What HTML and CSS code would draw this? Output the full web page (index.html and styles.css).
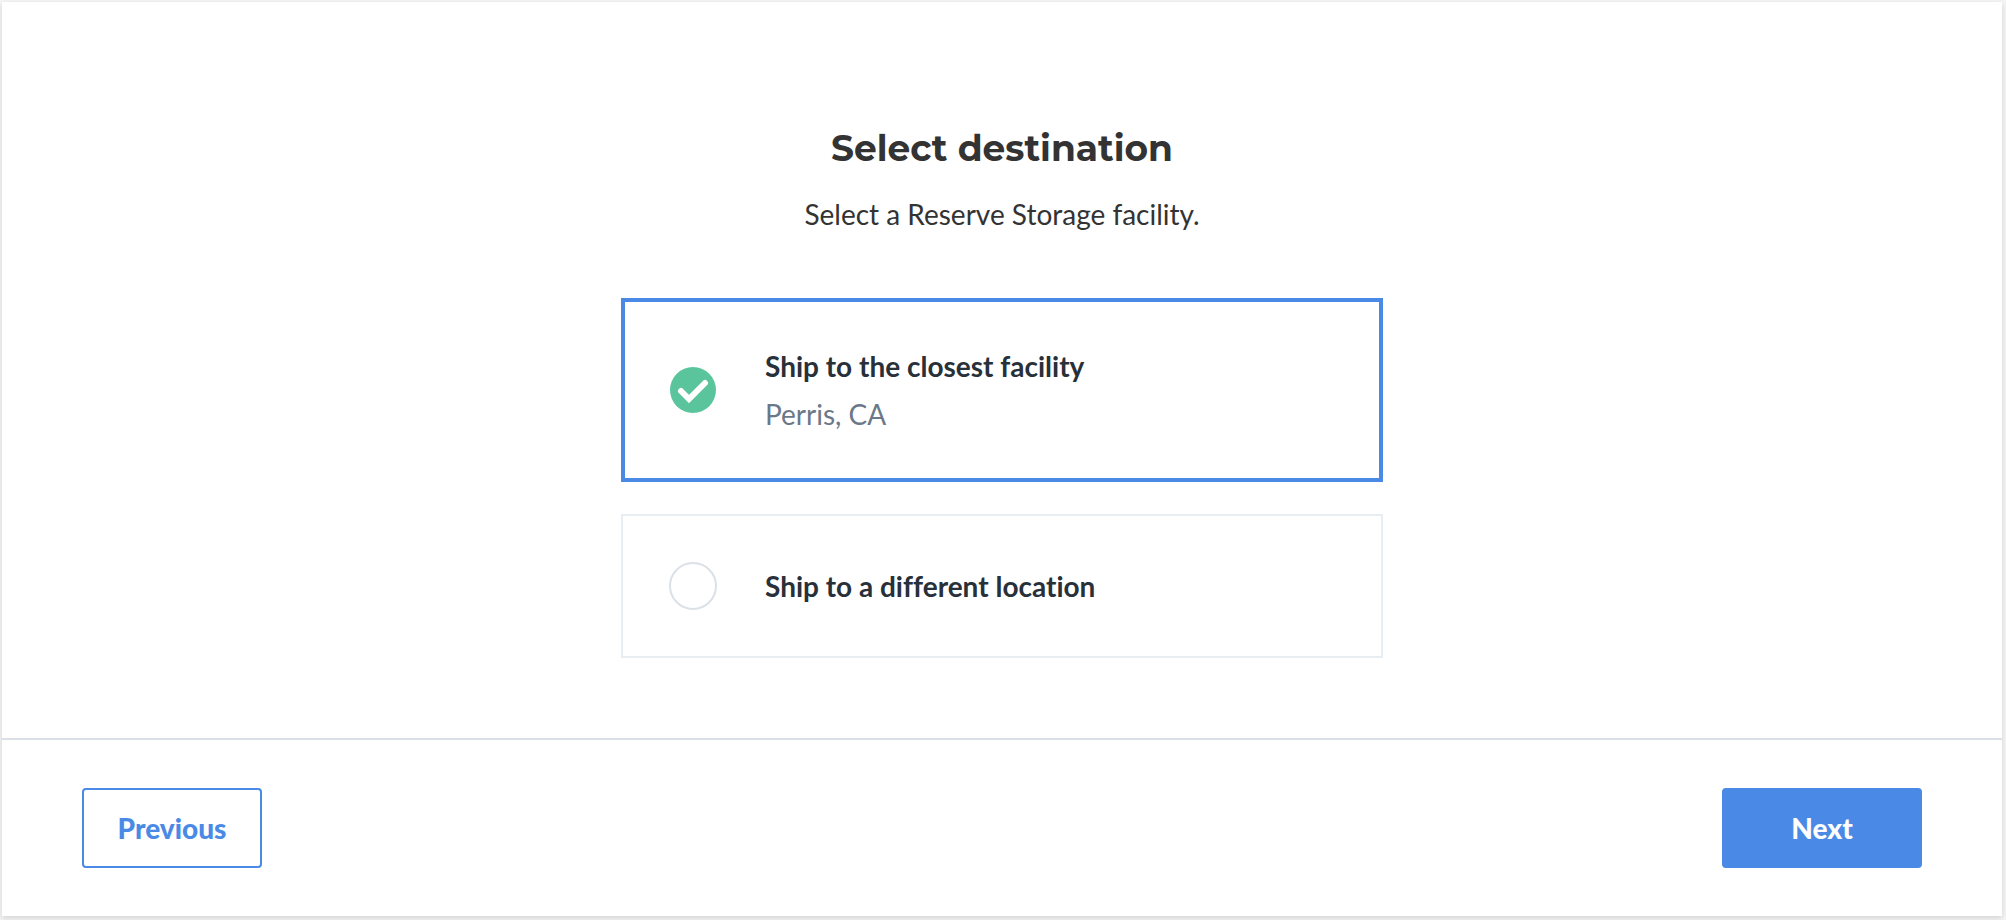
FILE: index.html
```html
<!DOCTYPE html>
<html lang="en">
<head>
    <meta charset="UTF-8">
    <meta name="viewport" content="width=device-width, initial-scale=1.0">
    <title>Select destination</title>
    <link rel="stylesheet" href="styles.css">
</head>
<body>
    <form class="card">
        <main class="content">
            <h1>Select destination</h1>
            <p class="subtitle">Select a Reserve Storage facility.</p>
            <div class="options">
                <label class="option">
                    <input type="radio" name="destination" value="closest" checked>
                    <span class="mark">
                        <svg viewBox="0 0 48 48" aria-hidden="true">
                            <circle cx="24" cy="24" r="23" />
                            <path d="M12 25l8 8 16-16" />
                        </svg>
                    </span>
                    <span class="text">
                        <span class="name">Ship to the closest facility</span>
                        <span class="place">Perris, CA</span>
                    </span>
                </label>
                <label class="option">
                    <input type="radio" name="destination" value="different">
                    <span class="mark">
                        <svg viewBox="0 0 48 48" aria-hidden="true">
                            <circle cx="24" cy="24" r="23" />
                            <path d="M12 25l8 8 16-16" />
                        </svg>
                    </span>
                    <span class="text">
                        <span class="name">Ship to a different location</span>
                    </span>
                </label>
            </div>
        </main>
        <footer>
            <button type="button" class="btn btn-outline">Previous</button>
            <button type="submit" class="btn btn-primary">Next</button>
        </footer>
    </form>
</body>
</html>
```
FILE: styles.css
```css
* {
    box-sizing: border-box;
}
body {
    font-family: Lato, sans-serif;
    font-size: 28px;
    font-variant-ligatures: none;
    background-color: #f5f5f5;
    color: #333;
    margin: 0;
    padding: 2px 4px 4px 2px;
}
.card {
    min-height: calc(100vh - 6px);
    display: flex;
    flex-direction: column;
    background-color: #fff;
    box-shadow: 0 2px 6px rgba(0, 0, 0, 0.15);
}
.content {
    flex: 1;
    padding: 120px 20px 80px;
    text-align: center;
}
h1 {
    margin: 0;
    font-family: Montserrat, Inter, sans-serif;
    font-size: 36px;
    line-height: 52px;
    font-weight: 700;
}
.subtitle {
    margin: 20px 0 64px;
    line-height: 40px;
}
.options {
    display: flex;
    flex-direction: column;
    gap: 32px;
    max-width: 762px;
    margin: 0 auto;
    text-align: left;
}
.option {
    display: flex;
    align-items: center;
    gap: 48px;
    padding: 46px;
    border: 2px solid #e8edf2;
    cursor: pointer;
}
.option input {
    position: absolute;
    opacity: 0;
}
.option:has(input:checked) {
    padding: 42px 44px;
    border: 4px solid #4a8ae6;
}
.mark {
    width: 48px;
    height: 48px;
    border: 2px solid #dbe1e7;
    border-radius: 50%;
}
.mark svg {
    display: none;
}
.mark circle {
    fill: #5ac49c;
}
.mark path {
    fill: none;
    stroke: #fff;
    stroke-width: 6;
    stroke-linecap: round;
}
input:checked + .mark {
    border: none;
}
input:checked + .mark svg {
    display: block;
}
.text {
    display: flex;
    flex-direction: column;
    gap: 4px;
    line-height: 44px;
}
.name {
    font-weight: 700;
    color: #28303a;
}
.place {
    color: #6b7888;
}
footer {
    display: flex;
    justify-content: space-between;
    padding: 48px 80px;
    border-top: 2px solid #dbe0e6;
}
.btn {
    height: 80px;
    font-family: "Lato Black", Lato, sans-serif;
    font-size: 28px;
    font-weight: 900;
    border: 2px solid #4a8ae6;
    border-radius: 4px;
    cursor: pointer;
}
.btn-outline {
    min-width: 180px;
    background-color: #fff;
    color: #4a8ae6;
}
.btn-primary {
    min-width: 200px;
    background-color: #4a8ae6;
    color: #fff;
}
```
